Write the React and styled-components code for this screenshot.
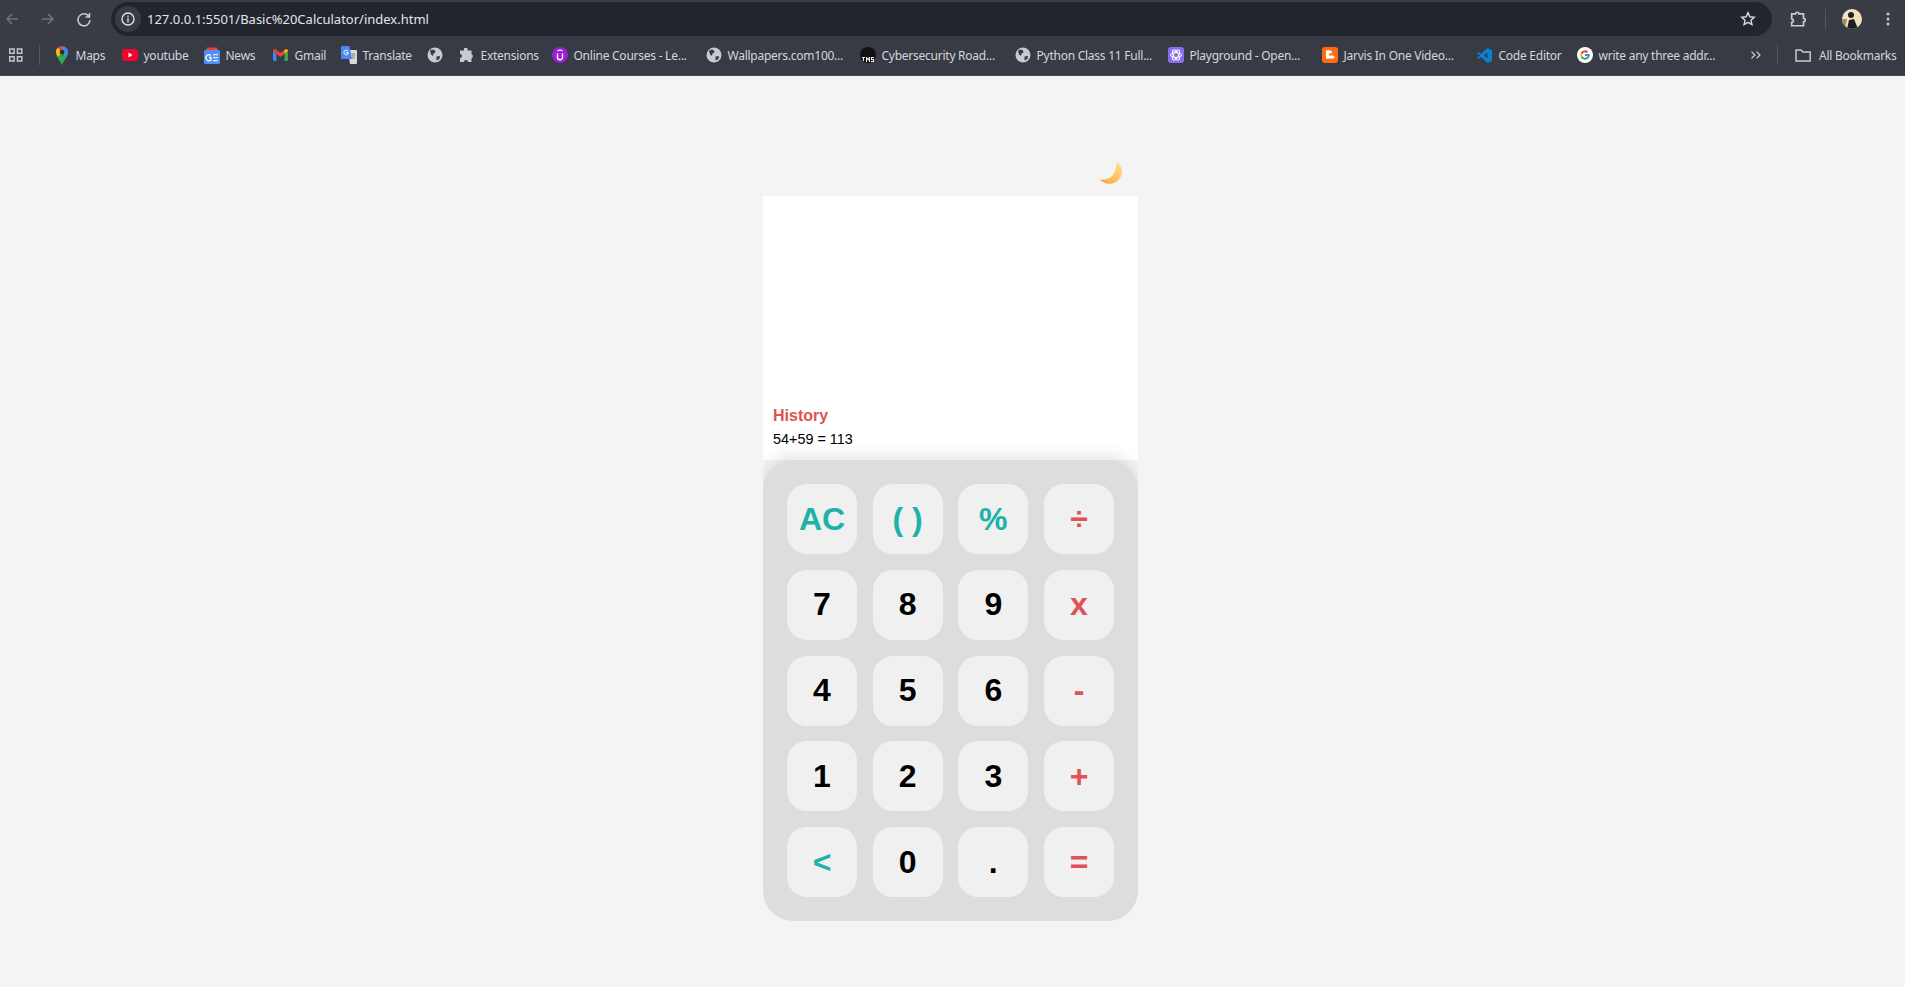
import styled, { createGlobalStyle } from "styled-components";

const GlobalStyle = createGlobalStyle`
  html, body {
    margin: 0;
    padding: 0;
    height: 100%;
    overflow: hidden;
    background: #f4f4f4;
    font-family: "Liberation Sans", Arial, sans-serif;
  }
`;

const Browser = styled.div`
  width: 1905px;
  height: 987px;
  display: flex;
  flex-direction: column;
`;

const Toolbar = styled.div`
  height: 36px;
  flex: none;
  padding-top: 2px;
  box-sizing: border-box;
  background: #393c45;
  display: flex;
  align-items: stretch;
`;

const NavIcons = styled.div`
  width: 111px;
  flex: none;
  display: flex;
  align-items: center;
  padding-left: 4px;
  box-sizing: border-box;
  gap: 20px;
`;

const Omnibox = styled.div`
  width: 1661px;
  flex: none;
  background: #22252d;
  border-radius: 17px;
  display: flex;
  align-items: center;
  padding: 0 16px 0 4px;
  box-sizing: border-box;
`;

const SiteInfo = styled.div`
  width: 26px;
  height: 26px;
  border-radius: 50%;
  background: #383b44;
  display: flex;
  align-items: center;
  justify-content: center;
  flex: none;
`;

const Url = styled.div`
  margin-left: 6px;
  flex: 1;
  font: 13px "Noto Sans", sans-serif;
  color: #e3e5e9;
`;

const ToolbarEnd = styled.div`
  flex: 1;
  display: flex;
  align-items: center;
  padding-left: 18px;
`;

const Divider = styled.div`
  width: 1px;
  height: 20px;
  background: #565962;
  flex: none;
  margin: ${(p) => p.$margin};
`;

const Avatar = styled.div`
  width: 20px;
  height: 20px;
  border-radius: 50%;
  overflow: hidden;
  flex: none;
  margin-left: 16px;
`;

const MenuDots = styled.svg`
  flex: none;
  margin-left: 24px;
`;

const BookmarkBar = styled.div`
  height: 40px;
  flex: none;
  background: #383b44;
  border-bottom: 1px solid #4a4c54;
  box-sizing: border-box;
  display: flex;
  align-items: center;
  padding: 0 0 1px 9px;
  color: #d3d6dc;
  font: 12px "Noto Sans", sans-serif;
`;

const Bookmark = styled.div`
  width: ${(p) => p.$w}px;
  flex: none;
  display: flex;
  align-items: center;
  gap: ${(p) => p.$gap ?? 6}px;
  white-space: nowrap;
  letter-spacing: -0.25px;
`;

const IconSlot = styled.span`
  width: 16px;
  height: 16px;
  flex: none;
  display: flex;
  align-items: center;
  justify-content: center;
`;

const Page = styled.main`
  flex: 1;
  background: #f4f4f4;
  display: flex;
  flex-direction: column;
  align-items: center;
  padding-right: 4px;
`;

const Calculator = styled.div`
  width: 375px;
  margin-top: 85px;
  display: flex;
  flex-direction: column;
`;

const ThemeToggle = styled.div`
  height: 35px;
  display: flex;
  justify-content: flex-end;
  padding-right: 15px;
`;

const Panel = styled.div`
  border-radius: 0 0 30px 30px;
  overflow: hidden;
  display: flex;
  flex-direction: column;
`;

const Display = styled.section`
  height: 264px;
  background: #fff;
  padding: 0 10px 12px;
  box-sizing: border-box;
  display: flex;
  flex-direction: column;
  justify-content: flex-end;
`;

const HistoryTitle = styled.h3`
  margin: 0 0 5px;
  font-size: 16px;
  line-height: 20px;
  font-weight: 700;
  color: #e05353;
`;

const HistoryLine = styled.div`
  font-size: 14.4px;
  line-height: 17px;
  color: #000;
`;

const Keypad = styled.section`
  height: 461px;
  background: #dddddd;
  border-radius: 30px;
  box-shadow: 0 -5px 15px rgba(0, 0, 0, 0.1);
  padding: 24px;
  box-sizing: border-box;
  display: grid;
  grid-template-columns: repeat(4, 70px);
  grid-auto-rows: 70px;
  justify-content: space-between;
  align-content: space-between;
`;

const Key = styled.button`
  border: none;
  padding: 0;
  border-radius: 20px;
  background: #f0f0f0;
  font-family: "Liberation Sans", Arial, sans-serif;
  font-size: 32px;
  font-weight: 700;
  color: ${(p) => p.$color || "#000"};
`;

const Line = ({ d, size = 16, color = "#c7cad0", width = 1.5, view = 16 }) => (
  <svg width={size} height={size} viewBox={`0 0 ${view} ${view}`} fill="none" stroke={color} strokeWidth={width}>
    <path d={d} />
  </svg>
);

const Globe = () => (
  <svg width="16" height="16" viewBox="0 0 16 16">
    <circle cx="8" cy="8" r="7.500" fill="#c7cad0" />
    <path d="M3 3.500l3-1 2 1 .5 2-2 1-.5 2.500-2-1.500zM9.500 9.500l3.500-.5-.5 3-3 1.500z" fill="#383b44" />
  </svg>
);

const Apps = () => (
  <svg width="14" height="14" viewBox="0 0 14 14" fill="none" stroke="#c7cad0" strokeWidth="1.5">
    <rect x="0.75" y="0.75" width="4.5" height="4.5" />
    <rect x="8.75" y="0.75" width="4.5" height="4.5" />
    <rect x="0.75" y="8.75" width="4.5" height="4.5" />
    <rect x="8.75" y="8.75" width="4.5" height="4.5" />
  </svg>
);

const MapsPin = () => (
  <svg width="16" height="20" viewBox="0 0 16 20">
    <path d="M8 20C6 15 2 12 2 7a6 6 0 0 1 2-4.500L8 7z" fill="#34a853" />
    <path d="M2 7a6 6 0 0 1 2-4.500L8 7l-4.500 5z" fill="#fbbc04" />
    <path d="M4 2.500A6 6 0 0 1 8 1V7z" fill="#ea4335" />
    <path d="M8 1a6 6 0 0 1 5 2.500L8 7z" fill="#4285f4" />
    <path d="M13 3.500A6 6 0 0 1 14 7c0 5-4 8-6 13-.5-1.500-1.500-3-2.500-4.500L13 3.500z" fill="#34a853" />
    <path d="M13 3.500A6 6 0 0 1 14 7c0 1.500-.5 3-1.500 4.500L8 7z" fill="#4285f4" />
    <circle cx="8" cy="7" r="2.300" fill="#3a2a20" />
  </svg>
);

const YouTube = () => (
  <svg width="16" height="16" viewBox="0 0 16 16">
    <rect x="0" y="2" width="16" height="12" rx="3.500" fill="#f4042c" />
    <path d="M6.500 5.500l4 2.500-4 2.500z" fill="#fff" />
  </svg>
);

const News = () => (
  <svg width="16" height="17" viewBox="0 0 16 17">
    <path d="M2 2h12v4H2z" fill="#34a853" />
    <path d="M3 0.500h10V3H3z" fill="#ea4335" />
    <rect x="0" y="3" width="16" height="14" rx="1.500" fill="#4f8ff0" />
    <path d="M9 7h5v1.300H9zM9 10h5v1.300H9zM9 13h5v1.300H9z" fill="#dfe9fb" />
    <path d="M7 8.500A3 3 0 1 0 7 13v-2.500H5" fill="none" stroke="#fff" strokeWidth="1.300" />
  </svg>
);

const Gmail = () => (
  <svg width="15" height="12" viewBox="0 0 15 12">
    <path d="M0 2v8.500A1.500 1.500 0 0 0 1.500 12H3.500V5z" fill="#4285f4" />
    <path d="M15 2v8.500a1.500 1.500 0 0 1-1.500 1.500h-2V5z" fill="#34a853" />
    <path d="M0 2c0-2 2-2.500 3-1.500L7.500 4 12 .5c1-1 3-.5 3 1.500L11.500 5 7.500 8 3.500 5z" fill="#ea4335" />
    <path d="M11.500 1l0 4 3.500-3C15 .5 13 0 11.500 1z" fill="#fbbc04" />
  </svg>
);

const Translate = () => (
  <svg width="16" height="18" viewBox="0 0 16 18">
    <path d="M7 4h8a1 1 0 0 1 1 1v12a1 1 0 0 1-1 1H9z" fill="#d9d9d9" />
    <path d="M1 0h7.500L11 13H1a1 1 0 0 1-1-1V1a1 1 0 0 1 1-1z" fill="#4a86ee" />
    <path d="M7 5A2.300 2.300 0 1 0 7 8V6.500H5" fill="none" stroke="#fff" strokeWidth="1" />
    <path d="M10 8h4M12 7v1M11 13l3-5M11 9l3 4" stroke="#888" strokeWidth="0.900" fill="none" />
  </svg>
);

const Puzzle = () => (
  <svg width="15" height="15" viewBox="0 0 15 15">
    <path d="M5 0.500a1.800 1.800 0 0 1 3.500 0V2.500H12.500V6.500a1.800 1.800 0 0 1 0 3.500V14H9a2 2 0 0 0-4 0H1V10a2 2 0 0 0 0-4V2.500H5z" fill="#c7cad0" />
  </svg>
);

const Udemy = () => (
  <svg width="16" height="16" viewBox="0 0 16 16">
    <circle cx="8" cy="8" r="8" fill="#9c1fd6" />
    <path d="M5.500 6.500v3.800a2.500 2.500 0 0 0 5 0V6.500" fill="none" stroke="#fff" strokeWidth="1.400" />
    <path d="M5.500 4L8 2.800 10.500 4" fill="none" stroke="#fff" strokeWidth="1.200" />
  </svg>
);

const Tms = () => (
  <svg width="16" height="16" viewBox="0 0 16 16">
    <circle cx="8" cy="8" r="8" fill="#111" />
    <path d="M2 10h3v1H4v3H3v-3H2zM6 10h1l1 2 1-2h1v5H9v-3l-1 2-1-2v3H6zM11 10h3v1h-2v1h2v3h-3v-1h2v-1h-2z" fill="#eee" />
  </svg>
);

const Playground = () => (
  <svg width="16" height="18" viewBox="0 0 16 18">
    <rect x="0" y="1" width="16" height="16" rx="3" fill="#8b6ff0" />
    <g fill="none" stroke="#fff" strokeWidth="0.900">
      <ellipse cx="8" cy="9" rx="5.500" ry="2.500" />
      <ellipse cx="8" cy="9" rx="5.500" ry="2.500" transform="rotate(60 8 9)" />
      <ellipse cx="8" cy="9" rx="5.500" ry="2.500" transform="rotate(120 8 9)" />
    </g>
  </svg>
);

const Blogger = () => (
  <svg width="16" height="18" viewBox="0 0 16 18">
    <rect x="0" y="1" width="16" height="16" rx="3" fill="#ff6d10" />
    <rect x="4" y="4.500" width="6" height="3" rx="1.500" fill="#fff" />
    <rect x="4" y="9.500" width="8.500" height="3" rx="1.500" fill="#fff" />
    <rect x="4" y="4.500" width="3" height="8" fill="#fff" />
  </svg>
);

const VsCode = () => (
  <svg width="15" height="15" viewBox="0 0 15 15">
    <path d="M10.500 0L15 2v11l-4.500 2L4 9l-2.500 2L0 10l3-2.500L0 5l1.500-1L4 6zM10.500 4.500L7 7.500l3.500 3z" fill="#0a7fd6" />
  </svg>
);

const Google = () => (
  <svg width="16" height="16" viewBox="0 0 16 16">
    <circle cx="8" cy="8" r="8" fill="#fff" />
    <path d="M12.500 7H8v2h2.500a2.800 2.800 0 0 1-1 1.300l1.600 1.400c1-.9 1.600-2.200 1.600-3.700z" fill="#4285f4" />
    <path d="M5.300 9a3 3 0 0 0 4.200 1.300l1.600 1.400A5 5 0 0 1 3.600 10z" fill="#34a853" />
    <path d="M3.600 6A5 5 0 0 0 3.600 10L5.300 9a3 3 0 0 1 0-2z" fill="#fbbc04" />
    <path d="M3.600 6a5 5 0 0 1 7.600-1.500L9.800 6a3 3 0 0 0-4.500 1z" fill="#ea4335" />
  </svg>
);

const Folder = () => (
  <Line d="M1 3h5l2 2h7.200v9H1z" />
);

const Moon = () => (
  <svg width="24" height="24" viewBox="0 0 24 24">
    <defs>
      <linearGradient id="moonFill" x1="1" y1="0" x2="0" y2="1">
        <stop offset="0" stopColor="#ffe08a" />
        <stop offset="0.550" stopColor="#fdc262" />
        <stop offset="1" stopColor="#f8994a" />
      </linearGradient>
    </defs>
    <path d="M17.500 1c4.500 3 6.500 8 5 13-1.700 5.600-7 9-12.500 8.800C6.500 22.700 3 21 .8 18.200c4 1 8.500.3 11.700-2.700C16 12.200 18 6.500 17.500 1z" fill="url(#moonFill)" />
  </svg>
);

const Profile = () => (
  <svg width="20" height="20" viewBox="0 0 20 20">
    <rect width="20" height="20" fill="#f3e2c0" />
    <circle cx="9" cy="6" r="3" fill="#22201e" />
    <path d="M5 20l2-9 5-1 4 10z" fill="#1c1f22" />
    <path d="M0 10h5l-2 10H0z" fill="#a88a5c" />
  </svg>
);

const bookmarks = [
  { label: "Maps", icon: <MapsPin />, w: 68 },
  { label: "youtube", icon: <YouTube />, w: 82 },
  { label: "News", icon: <News />, w: 69 },
  { label: "Gmail", icon: <Gmail />, w: 68 },
  { label: "Translate", icon: <Translate />, w: 86 },
  { label: "", icon: <Globe />, w: 32 },
  { label: "Extensions", icon: <Puzzle />, w: 93 },
  { label: "Online Courses - Le...", icon: <Udemy />, w: 154 },
  { label: "Wallpapers.com100...", icon: <Globe />, w: 154 },
  { label: "Cybersecurity Road...", icon: <Tms />, w: 155 },
  { label: "Python Class 11 Full...", icon: <Globe />, w: 153 },
  { label: "Playground - Open...", icon: <Playground />, w: 154 },
  { label: "Jarvis In One Video...", icon: <Blogger />, w: 155 },
  { label: "Code Editor", icon: <VsCode />, w: 100 },
  { label: "write any three addr...", icon: <Google />, w: 172 },
];

const keys = [
  ["AC", "#20b2aa"], ["( )", "#20b2aa"], ["%", "#20b2aa"], ["÷", "#e05353"],
  ["7"], ["8"], ["9"], ["x", "#e05353"],
  ["4"], ["5"], ["6"], ["-", "#e05353"],
  ["1"], ["2"], ["3"], ["+", "#e05353"],
  ["<", "#20b2aa"], ["0"], ["."], ["=", "#e05353"],
];

const App = () => {
  return (
    <Browser>
      <GlobalStyle />
      <Toolbar>
        <NavIcons>
          <Line d="M14 8H3M8 3L3 8l5 5" color="#6f727a" />
          <Line d="M2 8h11M8 3l5 5-5 5" color="#6f727a" />
          <Line d="M13 5.500A6 6 0 1 0 14 9M13.500 2v4h-4" color="#c7cad0" />
        </NavIcons>
        <Omnibox>
          <SiteInfo>
            <svg width="14" height="14" viewBox="0 0 14 14" fill="none" stroke="#e3e5e9" strokeWidth="1.300">
              <circle cx="7" cy="7" r="6" />
              <path d="M7 6v4.500M7 3.500v1.500" />
            </svg>
          </SiteInfo>
          <Url>127.0.0.1:5501/Basic%20Calculator/index.html</Url>
          <Line d="M8 1.800l1.900 4 4.300.5-3.200 3 .9 4.300L8 11.400l-3.900 2.200.9-4.300-3.200-3 4.300-.5z" color="#d3d6dc" />
        </Omnibox>
        <ToolbarEnd>
          <Line d="M1.500 3.500h3.500a1.500 1.500 0 0 1 3 0h4v4a1.500 1.500 0 0 1 0 3v3.500h-10.500v-3a1.500 1.500 0 0 0 0-3z" size={18} color="#c7cad0" />
          <Divider $margin="0 0 0 17px" />
          <Avatar><Profile /></Avatar>
          <MenuDots width="4" height="14" viewBox="0 0 4 14" fill="#c7cad0">
            <circle cx="2" cy="2" r="1.500" />
            <circle cx="2" cy="7" r="1.500" />
            <circle cx="2" cy="12" r="1.500" />
          </MenuDots>
        </ToolbarEnd>
      </Toolbar>
      <BookmarkBar>
        <Apps />
        <Divider $margin="0 14px 0 16px" />
        {bookmarks.map((b, i) => (
          <Bookmark key={i} $w={b.w}>
            <IconSlot>{b.icon}</IconSlot>
            {b.label && <span>{b.label}</span>}
          </Bookmark>
        ))}
        <Line d="M3 4l4 4-4 4M9 4l4 4-4 4" size={14} color="#d3d6dc" width={1.4} />
        <Divider $margin="0 17px 0 15px" />
        <Bookmark $w={110} $gap={8}>
          <IconSlot><Folder /></IconSlot>
          <span>All Bookmarks</span>
        </Bookmark>
      </BookmarkBar>
      <Page>
        <Calculator>
          <ThemeToggle><Moon /></ThemeToggle>
          <Panel>
            <Display>
              <HistoryTitle>History</HistoryTitle>
              <HistoryLine>54+59 = 113</HistoryLine>
            </Display>
            <Keypad>
              {keys.map(([label, color]) => (
                <Key key={label} $color={color}>{label}</Key>
              ))}
            </Keypad>
          </Panel>
        </Calculator>
      </Page>
    </Browser>
  );
};

export default App;
